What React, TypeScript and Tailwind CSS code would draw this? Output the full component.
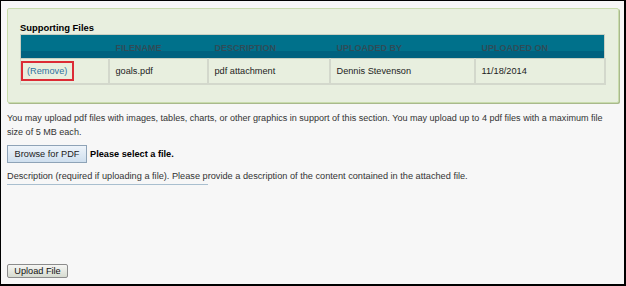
import React from 'react';

interface SupportingFile {
  filename: string
  description: string
  uploadedBy: string
  uploadedOn: string
}

const files: SupportingFile[] = [
  { filename: 'goals.pdf', description: 'pdf attachment', uploadedBy: 'Dennis Stevenson', uploadedOn: '11/18/2014' },
]

const App: React.FC = () => {
  return (
    <div
      className="w-[626px] h-[286px] bg-[#f7f7f7] border-t border-l border-r-2 border-b-2 border-black text-[9.2px] leading-[14px] text-[#222] flex flex-col"
      style={{ fontFamily: '"Liberation Sans", Arial, sans-serif' }}
    >
      {/* Supporting files panel */}
      <div className="ml-[6px] mr-[5px] mt-[7px] h-[95px] bg-[#e8efdf] border border-[#c9dcad] rounded-[2px] shadow-[1px_1px_0_#a9b98c] px-[12px] pt-[13px]">
        <div className="font-bold text-black text-[9.4px] leading-[12px] h-[12px]">Supporting Files</div>
        <table className="w-[584px] border-collapse table-fixed">
          <colgroup>
            <col className="w-[88px]" />
            <col className="w-[99px]" />
            <col className="w-[122px]" />
            <col className="w-[145px]" />
            <col className="w-[130px]" />
          </colgroup>
          <thead>
            <tr className="h-[24px] bg-[linear-gradient(to_bottom,#00718b_0,#00718b_66%,#00617f_66%,#00617f_100%)] text-[#2f4c58] font-bold text-[9px] leading-[10px] uppercase text-left">
              <th className="border border-[#c8cfc2] border-r-0"></th>
              <th className="px-[7px] pt-[3px] border-y border-[#c8cfc2] font-bold">Filename</th>
              <th className="px-[7px] pt-[3px] border-y border-[#c8cfc2] font-bold">Description</th>
              <th className="px-[7px] pt-[3px] border-y border-[#c8cfc2] font-bold">Uploaded By</th>
              <th className="px-[7px] pt-[3px] border border-l-0 border-[#c8cfc2] font-bold">Uploaded On</th>
            </tr>
          </thead>
          <tbody>
            {files.map((f) => (
              <tr key={f.filename} className="h-[25px] text-left">
                <td className="border-l border-r-2 border-b-2 border-[#d3d8cc] px-0">
                  <span className="inline-flex items-center h-[20px] w-[53px] border-2 border-[#dc2c36] pl-[4px] text-[#2f72a0]">(Remove)</span>
                </td>
                <td className="border-x-2 border-b-2 border-[#d3d8cc] px-[6px]">{f.filename}</td>
                <td className="border-x-2 border-b-2 border-[#d3d8cc] px-[6px]">{f.description}</td>
                <td className="border-x-2 border-b-2 border-[#d3d8cc] px-[6px]">{f.uploadedBy}</td>
                <td className="border-x-2 border-b-2 border-[#d3d8cc] px-[6px]">{f.uploadedOn}</td>
              </tr>
            ))}
          </tbody>
        </table>
      </div>

      {/* Upload form */}
      <div className="px-[6px] pt-[8px] flex flex-col flex-1 text-[#333]">
        <p className="text-[9.05px]">
          You may upload pdf files with images, tables, charts, or other graphics in support of this section. You may upload up to 4 pdf files with a maximum file size of 5 MB each.
        </p>
        <div className="flex items-center gap-[3px] mt-[6px]">
          <button className="h-[18px] w-[80px] border border-[#8ea3b7] bg-[linear-gradient(to_bottom,#eef4fa,#cfdfee)] text-[#222] text-[9.2px] leading-[14px]">
            Browse for PDF
          </button>
          <span className="font-bold text-black">Please select a file.</span>
        </div>
        <div className="mt-[6px] w-[201px] whitespace-nowrap border-b border-[#a9bfcf] pb-[1px]">
          Description (required if uploading a file). Please provide a description of the content contained in the attached file.
        </div>
        <div className="mt-auto mb-[6px]">
          <button className="h-[14px] w-[61px] rounded-[2px] border border-[#8c8c8c] bg-[linear-gradient(to_bottom,#f6f6f4,#d6dbd0)] text-[#111] text-[9.2px] leading-[12px]">
            Upload File
          </button>
        </div>
      </div>
    </div>
  );
};

export default App;
